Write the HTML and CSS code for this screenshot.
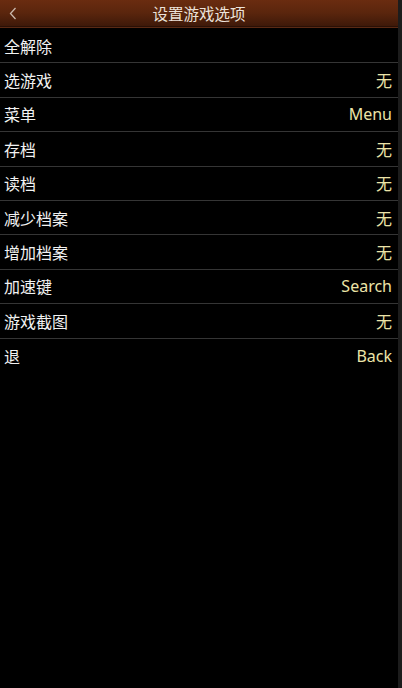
FILE: index.html
```html
<!DOCTYPE html>
<html>
<head>
<meta charset="utf-8">
<link rel="stylesheet" href="styles.css">
</head>
<body>
<div class="screen">
  <div class="main">
    <header class="topbar">
      <span class="back">
        <svg width="8" height="13" viewBox="0 0 8 13"><path d="M6.5 1 L1.5 6.5 L6.5 12" fill="none" stroke="#c9b8ac" stroke-width="1.3"/></svg>
      </span>
      <span class="title">设置游戏选项</span>
    </header>
    <ul class="list">
      <li class="row"><span class="label">全解除</span><span class="value"></span></li>
      <li class="row"><span class="label">选游戏</span><span class="value">无</span></li>
      <li class="row"><span class="label">菜单</span><span class="value">Menu</span></li>
      <li class="row"><span class="label">存档</span><span class="value">无</span></li>
      <li class="row"><span class="label">读档</span><span class="value">无</span></li>
      <li class="row"><span class="label">减少档案</span><span class="value">无</span></li>
      <li class="row"><span class="label">增加档案</span><span class="value">无</span></li>
      <li class="row"><span class="label">加速键</span><span class="value">Search</span></li>
      <li class="row"><span class="label">游戏截图</span><span class="value">无</span></li>
      <li class="row last"><span class="label">退</span><span class="value">Back</span></li>
    </ul>
  </div>
  <div class="edge"></div>
</div>
</body>
</html>
```

FILE: styles.css
```css
html, body {
  margin: 0;
  padding: 0;
  background: #000;
}
body {
  font-family: "Noto Sans", "Noto Sans CJK SC", sans-serif;
}
.screen {
  display: flex;
  width: 402px;
  height: 688px;
  overflow: hidden;
}
.main {
  flex: 1;
  display: flex;
  flex-direction: column;
  background: #000;
}
.edge {
  width: 4px;
  background: #1c1c1c;
}
.topbar {
  height: 26px;
  box-sizing: content-box;
  display: flex;
  align-items: center;
  justify-content: center;
  position: relative;
  background: linear-gradient(to bottom, #6a2c10 0%, #5a250d 50%, #3e1909 100%);
  border-bottom: 1px solid #2a1006;
  box-shadow: 0 1px 0 #5a2a14;
  margin-bottom: 2px;
}
.back {
  position: absolute;
  left: 9px;
  top: 7px;
  display: flex;
}
.title {
  color: #ece2da;
  font-family: "Noto Sans CJK SC", sans-serif;
  font-size: 15.5px;
  line-height: 26px;
}
.list {
  list-style: none;
  margin: 0;
  padding: 0;
}
.row {
  height: 34.4px;
  box-sizing: border-box;
  display: flex;
  align-items: center;
  justify-content: space-between;
  padding: 0 6px 0 4px;
  border-bottom: 1.5px solid #353535;
}
.row.last {
  border-bottom: none;
}
.label {
  color: #f2f2f2;
  font-family: "Noto Sans CJK SC", sans-serif;
  font-size: 16px;
}
.value {
  color: #ece4a8;
  font-size: 16px;
}
```
